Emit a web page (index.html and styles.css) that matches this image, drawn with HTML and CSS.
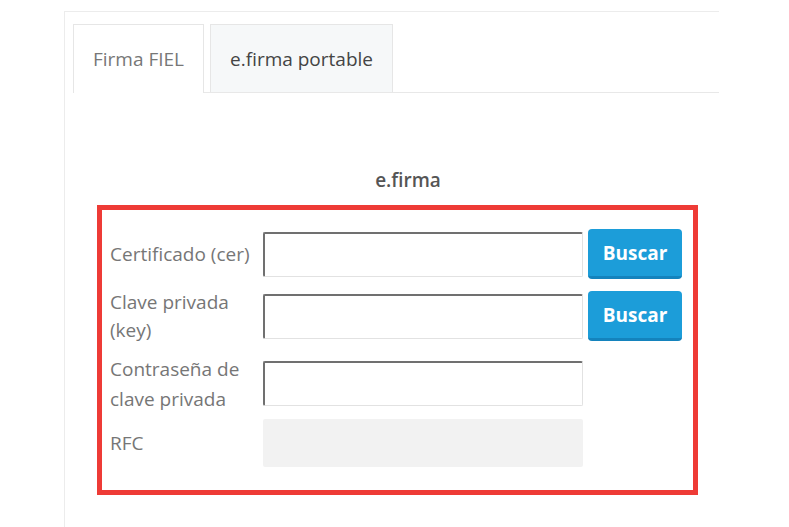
FILE: index.html
```html
<!DOCTYPE html>
<html lang="es">
<head>
<meta charset="utf-8">
<title>e.firma</title>
<link rel="stylesheet" href="styles.css">
</head>
<body>
<div class="page">
  <div class="panel">
    <ul class="tabs">
      <li class="tab active">Firma FIEL</li>
      <li class="tab">e.firma portable</li>
    </ul>
    <div class="content">
      <h2 class="title">e.firma</h2>
      <div class="frame">
        <div class="row row-cer">
          <label class="label">Certificado (cer)</label>
          <div class="input"></div>
          <button class="btn">Buscar</button>
        </div>
        <div class="row row-key">
          <label class="label">Clave privada<br>(key)</label>
          <div class="input"></div>
          <button class="btn">Buscar</button>
        </div>
        <div class="row row-pass">
          <label class="label">Contraseña de<br>clave privada</label>
          <div class="input"></div>
        </div>
        <div class="row row-rfc">
          <label class="label">RFC</label>
          <div class="input disabled"></div>
        </div>
      </div>
    </div>
  </div>
</div>
</body>
</html>
```

FILE: styles.css
```css
html, body {
  margin: 0;
  padding: 0;
  background: #ffffff;
  font-family: "Open Sans", "DejaVu Sans", sans-serif;
}

.page {
  padding: 11px 0 0 64px;
  height: 527px;
  box-sizing: border-box;
  overflow: hidden;
}

.panel {
  width: 655px;
  height: 540px;
  box-sizing: border-box;
  border-top: 1px solid #ececec;
  border-left: 1px solid #ececec;
  background: #ffffff;
}

.tabs {
  list-style: none;
  margin: 12px 0 0 8px;
  padding: 0;
  display: flex;
  gap: 6px;
  border-bottom: 1px solid #e8e8e8;
}

.tab {
  height: 68px;
  box-sizing: border-box;
  padding: 0 19px;
  display: flex;
  align-items: center;
  font-size: 19px;
  line-height: 28px;
  color: #444444;
  background: #f6f8f9;
  border: 1px solid #e6e6e6;
  border-bottom: none;
}

.tab.active {
  color: #777777;
  background: #ffffff;
  margin-bottom: -1px;
  height: 69px;
}

.title {
  margin: 73px 0 0 0;
  text-align: center;
  font-size: 19px;
  line-height: 28px;
  font-weight: 600;
  color: #555555;
  width: 686px;
}

.frame {
  margin: 11px 0 0 32px;
  width: 601px;
  box-sizing: border-box;
  border: 5px solid #ee3b36;
  padding: 16px 0 21px 8px;
}

.row {
  display: flex;
  align-items: center;
}

.row-cer { height: 56px; }
.row-key { height: 68px; }
.row-pass { height: 67px; }
.row-rfc { height: 52px; }

.label {
  width: 153px;
  flex: none;
  font-size: 19px;
  line-height: 28px;
  color: #767676;
}

.row-pass .label {
  line-height: 30px;
}

.input {
  width: 320px;
  height: 45px;
  box-sizing: border-box;
  border-style: solid;
  border-width: 2px 1px 1px 2px;
  border-color: #707070 #e2e2e2 #e2e2e2 #707070;
  border-radius: 2px;
  background: #ffffff;
  flex: none;
}

.input.disabled {
  height: 48px;
  border: none;
  background: #f2f2f2;
}

.btn {
  margin-left: 5px;
  width: 94px;
  height: 50px;
  box-sizing: border-box;
  border: none;
  border-bottom: 3px solid #1483bd;
  border-radius: 4px;
  background: #1c9dd9;
  color: #ffffff;
  font-family: "Open Sans", "DejaVu Sans", sans-serif;
  font-size: 19px;
  font-weight: 700;
  padding: 0;
  flex: none;
}
```
